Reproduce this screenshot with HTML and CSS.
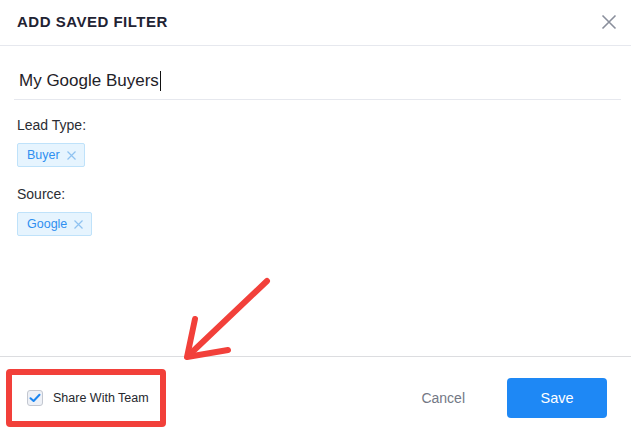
FILE: index.html
```html
<!DOCTYPE html>
<html>
<head>
<meta charset="utf-8">
<link rel="stylesheet" href="styles.css">
</head>
<body>
<div class="dialog">
  <header class="head">
    <h1 class="title">ADD SAVED FILTER</h1>
    <button class="close" aria-label="Close">
      <svg width="16" height="16" viewBox="0 0 16 16"><path d="M1.5 1.5 L14.5 14.5 M14.5 1.5 L1.5 14.5" stroke="#8a8f9c" stroke-width="1.6" fill="none"/></svg>
    </button>
  </header>
  <main class="body">
    <div class="name-field"><span class="name-text">My Google Buyers</span><span class="caret"></span></div>
    <div class="group">
      <div class="label">Lead Type:</div>
      <span class="tag">Buyer <svg class="tag-x" width="9" height="9" viewBox="0 0 9 9"><path d="M0.5 0.5 L8.5 8.5 M8.5 0.5 L0.5 8.5" stroke="#8fc2f0" stroke-width="1.2"/></svg></span>
    </div>
    <div class="group">
      <div class="label">Source:</div>
      <span class="tag">Google <svg class="tag-x" width="9" height="9" viewBox="0 0 9 9"><path d="M0.5 0.5 L8.5 8.5 M8.5 0.5 L0.5 8.5" stroke="#8fc2f0" stroke-width="1.2"/></svg></span>
    </div>
  </main>
  <footer class="foot">
    <label class="share">
      <span class="check"><svg width="12" height="10" viewBox="0 0 12 10"><path d="M1.5 5.2 L4.6 8 L10.5 1.8" stroke="#1d86f0" stroke-width="2" fill="none" stroke-linecap="round" stroke-linejoin="round"/></svg></span>
      <span class="share-text">Share With Team</span>
    </label>
    <div class="actions">
      <button class="cancel">Cancel</button>
      <button class="save">Save</button>
    </div>
  </footer>
  <svg class="arrow" width="631" height="430" viewBox="0 0 631 430">
    <g stroke="#f2403a" stroke-width="6" stroke-linecap="round" stroke-linejoin="round" fill="none">
      <path d="M267 281 L188 356"/>
      <path d="M195 319 L187 357 L228 350"/>
    </g>
  </svg>
</div>
</body>
</html>
```
FILE: styles.css
```css
* { box-sizing: border-box; }
html, body { margin: 0; padding: 0; background: #fff; }
body {
  font-family: "Liberation Sans", Arial, sans-serif;
  width: 631px;
  height: 430px;
  overflow: hidden;
}
.dialog {
  position: relative;
  width: 631px;
  height: 430px;
  display: flex;
  flex-direction: column;
}
.head {
  height: 46px;
  border-bottom: 1px solid #e6e8ee;
  display: flex;
  align-items: center;
  justify-content: space-between;
  padding: 0 14px 2px 17px;
}
.title {
  margin: 0;
  font-size: 15px;
  font-weight: 700;
  color: #1f2333;
  letter-spacing: 0.5px;
}
.close {
  border: 0;
  background: none;
  padding: 0;
  width: 16px;
  height: 16px;
  display: flex;
}
.body {
  flex: 1;
  padding: 0 10px 0 17px;
}
.name-field {
  margin: 0 0 0 -3px;
  height: 54px;
  border-bottom: 1px solid #e6e8ee;
  display: flex;
  align-items: center;
  padding: 16px 0 0 5px;
  font-size: 17px;
  color: #1f2229;
}
.caret {
  display: inline-block;
  width: 1px;
  height: 20px;
  background: #111;
  margin-left: 1px;
}
.group { margin-top: 16px; }
.group + .group { margin-top: 18px; }
.label {
  font-size: 14px;
  color: #2b2d33;
  line-height: 18px;
}
.tag {
  margin-top: 9px;
  display: inline-flex;
  align-items: center;
  gap: 7px;
  height: 24px;
  padding: 0 8px 0 9px;
  background: #e6f4fe;
  border: 1px solid #bfe2fa;
  border-radius: 2px;
  color: #2f8ff0;
  font-size: 12.5px;
}
.foot {
  height: 74px;
  border-top: 1px solid #dcdde0;
  display: flex;
  align-items: center;
  justify-content: space-between;
  padding: 0 24px 0 6px;
}
.share {
  width: 160px;
  height: 58px;
  margin-top: 8px;
  border: 6px solid #f2403a;
  border-radius: 4px;
  display: flex;
  align-items: center;
  padding-left: 15px;
  gap: 10px;
}
.check {
  width: 16px;
  height: 16px;
  border: 1px solid #c3c7d0;
  border-radius: 3px;
  background: #eef1f7;
  display: flex;
  align-items: center;
  justify-content: center;
}
.share-text {
  font-size: 12.5px;
  color: #26282e;
}
.actions {
  display: flex;
  align-items: center;
  gap: 42px;
  margin-top: 8px;
}
.cancel {
  border: 0;
  background: none;
  font-family: inherit;
  font-size: 14px;
  color: #737885;
  padding: 0;
}
.save {
  width: 100px;
  height: 40px;
  border: 0;
  border-radius: 4px;
  background: #1e88f5;
  color: #fff;
  font-family: inherit;
  font-size: 14.5px;
}
.arrow {
  position: absolute;
  left: 0;
  top: 0;
  pointer-events: none;
}
```
